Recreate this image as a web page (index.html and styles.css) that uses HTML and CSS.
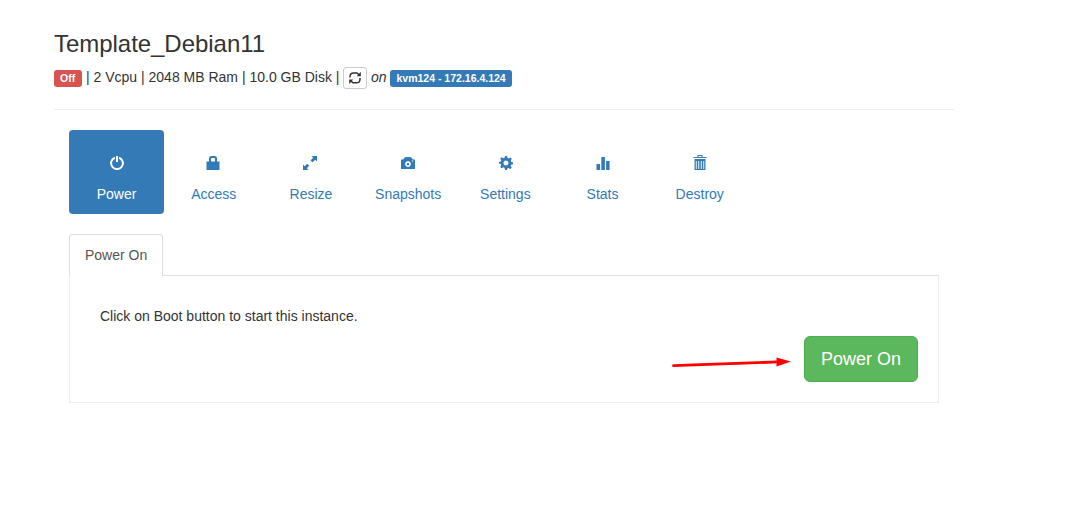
FILE: index.html
```html
<!DOCTYPE html>
<html lang="en">
<head>
<meta charset="utf-8">
<title>Template_Debian11</title>
<link rel="stylesheet" href="styles.css">
</head>
<body>
<main class="page">
  <header class="header">
    <h3 class="title">Template_Debian11</h3>
    <div class="specs">
      <span class="label label-danger">Off</span>
      <span class="spec-text">| 2 Vcpu | 2048 MB Ram | 10.0 GB Disk |</span>
      <button class="refresh" aria-label="Refresh">
        <svg class="refresh-icon" viewBox="0 0 14 14"><path d="M2 6.500V5.500Q2.200 2 5.500 2H9L11 3.700M12 7v1.200Q11.800 11.800 8.500 11.800H5L3 10" fill="none" stroke="currentColor" stroke-width="1.500"/><path d="M12.800.8v4.500H8.800zM1.200 13V8.500h4z" fill="currentColor"/></svg>
      </button>
      <em class="on">on</em>
      <span class="label label-primary">kvm124 - 172.16.4.124</span>
    </div>
  </header>
  <section class="content">
    <nav class="pills">
      <a class="pill active"><svg class="icon" viewBox="0 0 14 14"><path d="M4.900 1.700A5.900 5.900 0 1 0 9.100 1.700" fill="none" stroke="currentColor" stroke-width="2"/><path d="M6 0h2v6H6z"/></svg><span>Power</span></a>
      <a class="pill"><svg class="icon icon-lock" viewBox="0 0 14 14"><path fill-rule="evenodd" d="M.5 5.500H3V2.500Q3 0 5.500 0h3Q11 0 11 2.500v3h2.500V14H.5zM5 5.500h4V3Q9 2 8 2H6Q5 2 5 3z"/></svg><span>Access</span></a>
      <a class="pill"><svg class="icon icon-resize" viewBox="0 0 14 14"><path d="M8.500 0H14v5.500l-1.700-1.700-2.800 2.500-2-1.800 2.700-2.800zM0 8.500l1.700 1.700 2.500-2.400 2 1.900-2.400 2.600L5.500 14H0z"/></svg><span>Resize</span></a>
      <a class="pill"><svg class="icon icon-camera" viewBox="0 0 14 14"><path fill-rule="evenodd" d="M4.500 1h5L12 3.500h2V13H0V3.500h2zM7 5.300a2.800 2.800 0 1 0 0 5.600 2.800 2.800 0 0 0 0-5.600zM7 7a1.200 1.200 0 1 1 0 2.400A1.200 1.200 0 0 1 7 7zM11 4.500v1h1.200v-1z"/></svg><span>Snapshots</span></a>
      <a class="pill"><svg class="icon icon-cog" viewBox="0 0 14 14"><path fill-rule="evenodd" d="M6 0h2l.5 2 1.200.5 1.800-1.100 1.300 1.400-1 1.800.5 1.300 1.700.4v2l-1.800.5-.5 1.200 1.100 1.800-1.400 1.300-1.800-1-1.200.5L8 14H6l-.5-2.300-1.200-.5-1.800 1.100L1.200 11l1-1.800L1.700 8 0 7.600V6l1.800-.5.5-1.200-1.100-1.800 1.400-1.200 1.800 1 1.200-.5zM7 4.500a2.500 2.500 0 1 0 0 5 2.500 2.500 0 0 0 0-5z"/></svg><span>Settings</span></a>
      <a class="pill"><svg class="icon icon-stats" viewBox="0 0 14 14"><path d="M.5 8h3.600v6H.5zM5.300 1h3.600v13H5.300zM10.100 5h3.500v9h-3.500z"/></svg><span>Stats</span></a>
      <a class="pill"><svg class="icon icon-trash" viewBox="0 0 13 16"><path fill-rule="evenodd" d="M4 2V0h5v2h4v1H0V2zM5 1v1h3V1zM1 4h11v11H1zM2.300 6v8h.9V6zM4.800 6v8h.9V6zM7.300 6v8h.9V6zM9.800 6v8h.9V6z"/></svg><span>Destroy</span></a>
    </nav>
    <div class="tabs"><a class="tab">Power On</a></div>
    <div class="panel">
      <p class="message">Click on Boot button to start this instance.</p>
      <button class="boot">Power On</button>
    </div>
  </section>
</main>
<svg class="arrow" width="122" height="14" viewBox="0 0 122 14"><path d="M2.500 9.700L107 5.900" stroke="red" stroke-width="2.800" stroke-linecap="round"/><path d="M105.500 1.500L120 5.500 105.500 10.500z" fill="red"/></svg>
</body>
</html>
```
FILE: styles.css
```css
* { box-sizing: border-box; }
body {
  margin: 0;
  background: #fff;
  color: #333;
  font: 14px/20px "Liberation Sans", Arial, sans-serif;
}
button { font-family: inherit; }
.page { width: 900px; margin-left: 54px; padding-top: 31px; }
.header { height: 79px; border-bottom: 1px solid #eee; }
.title { margin: 0; font-size: 24px; font-weight: 500; line-height: 26px; letter-spacing: -.04px; }
.specs { display: flex; align-items: center; height: 24px; margin-top: 9px; white-space: nowrap; }
.label {
  height: 17px;
  padding: 0 6px;
  border-radius: 3px;
  color: #fff;
  font-size: 10.5px;
  font-weight: 700;
  line-height: 17px;
}
.label-danger { width: 28px; background: #d9534f; }
.label-primary { width: 122px; margin-left: 4px; padding-left: 6.5px; background: #337ab7; }
.spec-text { width: 257px; margin: -2px 0 0 4px; }
.refresh {
  display: flex;
  align-items: center;
  justify-content: center;
  width: 24px;
  height: 22px;
  padding: 0;
  border: 1px solid #ccc;
  border-radius: 3px;
  background: #fff;
  color: #333;
}
.refresh-icon { width: 14px; height: 14px; margin-top: -1px; }
.on { width: 15px; margin: -2px 0 0 4px; }
.content { width: 870px; margin: 20px 0 0 15px; }
.pills { display: flex; gap: 2px; height: 84px; }
.pill {
  display: flex;
  flex-direction: column;
  align-items: center;
  width: 95.2px;
  padding-top: 26px;
  border-radius: 4px;
  color: #337ab7;
}
.pill.active { background: #337ab7; color: #fff; }
.pill span { margin-top: 14px; }
.icon { width: 14px; height: 14px; fill: currentColor; }
.icon-lock, .icon-resize, .icon-camera { margin-right: 1px; }
.icon-cog, .icon-stats { margin-left: 1px; }
.icon-trash { height: 16px; margin: -1px 0; }
.tabs { display: flex; height: 42px; margin-top: 20px; border-bottom: 1px solid #ddd; }
.tab {
  width: 94px;
  height: 42px;
  padding: 10px 15px;
  border: 1px solid #ddd;
  border-bottom-color: #fff;
  border-radius: 4px 4px 0 0;
  background: #fff;
  color: #555;
  white-space: nowrap;
}
.panel {
  display: flex;
  flex-direction: column;
  height: 127px;
  padding: 30px 20px 20px 30px;
  border: 1px solid #eee;
  border-top: 0;
}
.message { margin: 0; }
.boot {
  align-self: flex-end;
  width: 114px;
  height: 46px;
  margin-top: 10px;
  padding: 0;
  border: 1px solid #4cae4c;
  border-radius: 6px;
  background: #5cb85c;
  color: #fff;
  font-size: 18px;
}
.arrow { position: absolute; left: 671px; top: 356px; }
```
